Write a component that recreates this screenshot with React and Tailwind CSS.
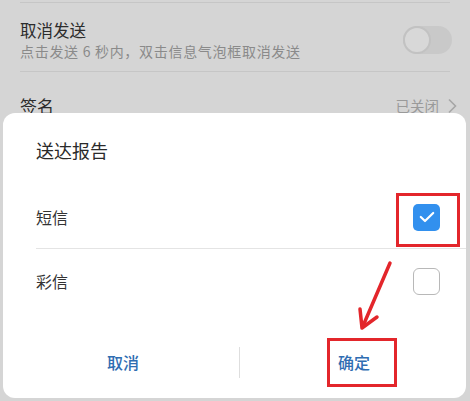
import React from "react";

const font = { fontFamily: '"Noto Sans CJK SC", "Noto Sans", sans-serif' };

export default function App() {
  return (
    <div
      className="relative w-[470px] h-[401px] overflow-hidden bg-[#d5d5d5]"
      style={font}
    >
      {/* background settings page */}
      <div className="pt-[2px]">
        <div className="mx-5 h-px bg-[#c6c6c6]" />
        <div className="flex items-center justify-between pl-5 pr-[18px] pt-[16px] pb-[10px]">
          <div>
            <div className="text-[16.5px] leading-[22px] text-[#2c2c2c]">取消发送</div>
            <div className="text-[14px] leading-[20px] tracking-[0.7px] text-[#8a8a8a]">
              点击发送 6 秒内，双击信息气泡框取消发送
            </div>
          </div>
          <div className="relative h-[28px] w-[49px] rounded-full bg-[#c9c9c9]">
            <div className="absolute left-0 top-0 h-[28px] w-[28px] rounded-full border-[2px] border-[#c2c2c2] bg-[#d8d8d8]" />
          </div>
        </div>
        <div className="mx-5 h-px bg-[#c6c6c6]" />
        <div className="flex items-center justify-between pl-5 pr-[13px] pt-[22px]">
          <div className="text-[17px] leading-[24px] text-[#2c2c2c]">签名</div>
          <div className="flex items-center gap-[8px] text-[14.5px] leading-[20px] text-[#9a9a9a]">
            <span>已关闭</span>
            <svg width="10" height="16" viewBox="0 0 10 16" fill="none">
              <path d="M2 1.5 L8.5 8 L2 14.5" stroke="#a6a6a6" strokeWidth="1.6" />
            </svg>
          </div>
        </div>
      </div>

      {/* dialog */}
      <div className="absolute left-[3px] right-[4px] top-[113px] bottom-[3px] rounded-[12px] bg-white">
        <div className="pl-[33px] pt-[24px] text-[18px] leading-[26px] text-[#2a2a2a]">
          送达报告
        </div>
        <div className="mt-[23px] ml-[33px]">
          <div className="flex h-[63px] items-center justify-between border-b border-[#e4e4e4] pr-[26px]">
            <span className="text-[16px] text-[#333333]">短信</span>
            <div className="flex h-[27px] w-[27px] items-center justify-center rounded-[5px] bg-[#3290ee]">
              <svg width="16" height="12" viewBox="0 0 16 12" fill="none">
                <path d="M1.8 6 L6 10 L14.2 2" stroke="white" strokeWidth="2.2" strokeLinecap="round" strokeLinejoin="round" />
              </svg>
            </div>
          </div>
          <div className="flex h-[64px] items-center justify-between pr-[26px]">
            <span className="text-[16px] text-[#333333]">彩信</span>
            <div className="h-[27px] w-[27px] rounded-[6px] border-[1.5px] border-[#b8b8b8]" />
          </div>
        </div>
        <div className="mt-[21px] flex h-[56px] items-center">
          <div className="flex w-[236px] justify-center pl-[4px] text-[16px] font-medium text-[#2f6db2]">
            取消
          </div>
          <div className="h-[31px] w-px bg-[#dedede]" />
          <div className="flex flex-1 justify-center pl-[2px] text-[16px] font-medium text-[#2f6db2]">
            确定
          </div>
        </div>
      </div>

      {/* annotations */}
      <div className="absolute left-[396px] top-[193px] h-[54px] w-[64px] border-[3px] border-[#e3262b]" />
      <div className="absolute left-[327px] top-[338px] h-[49px] w-[70px] border-[3px] border-[#e3262b]" />
      <svg
        className="absolute left-0 top-0"
        width="470"
        height="401"
        viewBox="0 0 470 401"
        fill="none"
      >
        <path d="M390 263 L363 326" stroke="#e3262b" strokeWidth="3.5" strokeLinecap="round" />
        <path d="M360 309 L362 328 L377 317" stroke="#e3262b" strokeWidth="3.5" strokeLinecap="round" strokeLinejoin="round" />
      </svg>
    </div>
  );
}
